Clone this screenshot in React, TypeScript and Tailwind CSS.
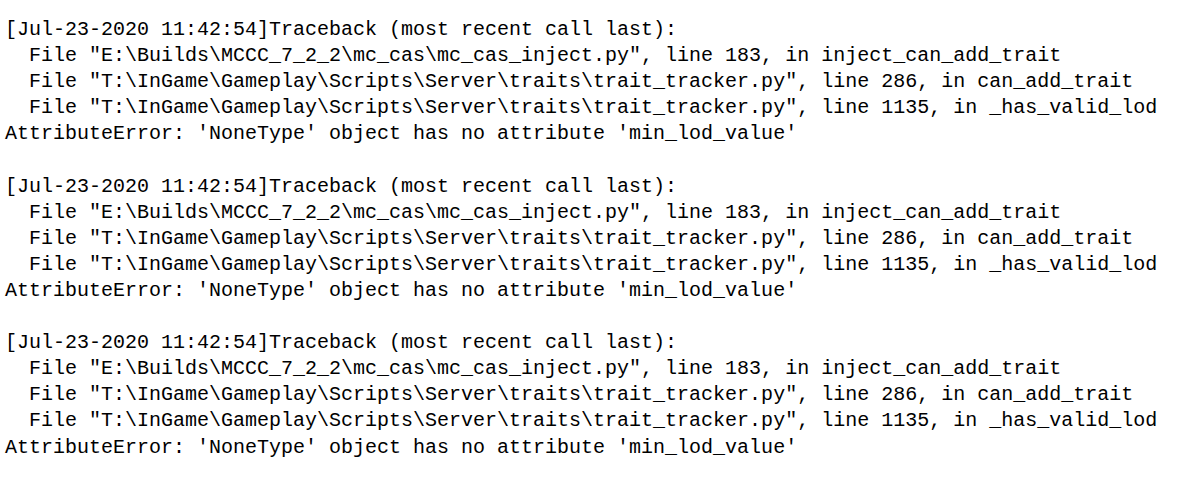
import React from "react";

const block = [
  "[Jul-23-2020 11:42:54]Traceback (most recent call last):",
  '  File "E:\\Builds\\MCCC_7_2_2\\mc_cas\\mc_cas_inject.py", line 183, in inject_can_add_trait',
  '  File "T:\\InGame\\Gameplay\\Scripts\\Server\\traits\\trait_tracker.py", line 286, in can_add_trait',
  '  File "T:\\InGame\\Gameplay\\Scripts\\Server\\traits\\trait_tracker.py", line 1135, in _has_valid_lod',
  "AttributeError: 'NoneType' object has no attribute 'min_lod_value'",
];

const App = () => {
  const lines = [...block, "", ...block, "", ...block];
  return (
    <div className="w-[1199px] h-[481px] bg-white overflow-hidden">
      <pre className="pt-[17px] pl-[5px] text-black text-[20px] leading-[26px] font-['Liberation_Mono',monospace] whitespace-pre">
        {lines.map((l, i) => (
          <div key={i} className="h-[26.1px]">
            {l}
          </div>
        ))}
      </pre>
    </div>
  );
};

export default App;
